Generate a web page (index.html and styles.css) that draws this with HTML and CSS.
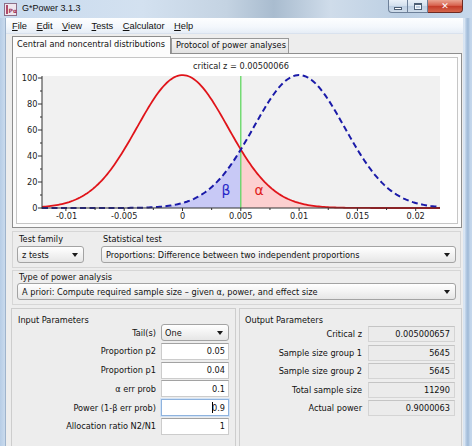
FILE: index.html
```html
<!DOCTYPE html>
<html>
<head>
<meta charset="utf-8">
<title>G*Power 3.1.3</title>
<link rel="stylesheet" href="styles.css">
</head>
<body>
<div class="window">
  <div class="titlebar">
    <svg class="appicon" width="13" height="13" viewBox="0 0 13 13">
      <rect x="0.5" y="0.5" width="12" height="12" fill="#efe6ee" stroke="#8c6f88"/>
      <rect x="2" y="2" width="2" height="9" fill="#b04a6a"/>
      <text x="4.5" y="10" class="icotext">Pα</text>
    </svg>
    <span class="title">G*Power 3.1.3</span>
    <div class="controls">
      <div class="ctl min"><span class="minglyph"></span></div>
      <div class="ctl max"><span class="maxglyph"></span></div>
      <div class="ctl close">✕</div>
    </div>
  </div>
  <div class="client">
    <div class="menubar">
      <span><u>F</u>ile</span>
      <span><u>E</u>dit</span>
      <span><u>V</u>iew</span>
      <span><u>T</u>ests</span>
      <span><u>C</u>alculator</span>
      <span><u>H</u>elp</span>
    </div>
    <div class="tabs">
      <div class="tab active">Central and noncentral distributions</div>
      <div class="tab second">Protocol of power analyses</div>
    </div>
    <div class="tabpanel">
      <div class="chartbox">
        <svg class="chart" width="440" height="165" viewBox="17 58 440 165">
          <rect x="42" y="76" width="398" height="132" fill="#f1f1f1"/>
          <text class="ctitle" x="241" y="69" text-anchor="middle">critical z = 0.00500066</text>
          <path id="betaFill" fill="#c8c9f6" d=""/>
          <path id="alphaFill" fill="#fcd0d0" d=""/>
          <line x1="240.8" y1="76" x2="240.8" y2="208" stroke="#55d655" stroke-width="1.2"/>
          <path id="redCurve" fill="none" stroke="#e0141a" stroke-width="1.8" d=""/>
          <path id="blueCurve" fill="none" stroke="#1a1aa8" stroke-width="2" stroke-dasharray="6 3.5" d=""/>
          <g stroke="#333" stroke-width="1">
            <line x1="42" y1="76" x2="42" y2="208.5"/>
            <line x1="41.5" y1="208" x2="440" y2="208"/>
            <line x1="65.9" y1="208" x2="65.9" y2="211"/>
            <line x1="95.05" y1="208" x2="95.05" y2="210"/>
            <line x1="124.2" y1="208" x2="124.2" y2="211"/>
            <line x1="153.35" y1="208" x2="153.35" y2="210"/>
            <line x1="182.5" y1="208" x2="182.5" y2="211"/>
            <line x1="211.65" y1="208" x2="211.65" y2="210"/>
            <line x1="240.8" y1="208" x2="240.8" y2="211"/>
            <line x1="269.95" y1="208" x2="269.95" y2="210"/>
            <line x1="299.1" y1="208" x2="299.1" y2="211"/>
            <line x1="328.25" y1="208" x2="328.25" y2="210"/>
            <line x1="357.4" y1="208" x2="357.4" y2="211"/>
            <line x1="386.55" y1="208" x2="386.55" y2="210"/>
            <line x1="415.7" y1="208" x2="415.7" y2="211"/>
            <line x1="38" y1="208" x2="42" y2="208"/>
            <line x1="40" y1="195" x2="42" y2="195"/>
            <line x1="38" y1="182" x2="42" y2="182"/>
            <line x1="40" y1="169" x2="42" y2="169"/>
            <line x1="38" y1="156" x2="42" y2="156"/>
            <line x1="40" y1="143" x2="42" y2="143"/>
            <line x1="38" y1="130" x2="42" y2="130"/>
            <line x1="40" y1="117" x2="42" y2="117"/>
            <line x1="38" y1="104" x2="42" y2="104"/>
            <line x1="40" y1="91" x2="42" y2="91"/>
            <line x1="38" y1="78" x2="42" y2="78"/>
          </g>
          <g class="axislbl" text-anchor="middle">
            <text x="66.5" y="219">-0.01</text>
            <text x="124.2" y="219">-0.005</text>
            <text x="182.5" y="219">0</text>
            <text x="240.8" y="219">0.005</text>
            <text x="299.1" y="219">0.01</text>
            <text x="357.4" y="219">0.015</text>
            <text x="415.7" y="219">0.02</text>
          </g>
          <g class="axislbl" text-anchor="end">
            <text x="37.5" y="211">0</text>
            <text x="37.5" y="185">20</text>
            <text x="37.5" y="159">40</text>
            <text x="37.5" y="133">60</text>
            <text x="37.5" y="107">80</text>
            <text x="37.5" y="81">100</text>
          </g>
          <text class="greek beta" x="226" y="195" text-anchor="middle">β</text>
          <text class="greek alpha" x="259" y="195" text-anchor="middle">α</text>
        </svg>
      </div>
    </div>
    <div class="group tests">
      <div class="col family">
        <div class="lbl">Test family</div>
        <div class="select"><span>z tests</span><span class="arrow"></span></div>
      </div>
      <div class="col stat">
        <div class="lbl">Statistical test</div>
        <div class="select"><span>Proportions: Difference between two independent proportions</span><span class="arrow"></span></div>
      </div>
    </div>
    <div class="group analysis">
      <div class="lbl">Type of power analysis</div>
      <div class="select"><span>A priori: Compute required sample size – given α, power, and effect size</span><span class="arrow"></span></div>
    </div>
    <div class="params">
      <div class="pgroup input">
        <div class="ptitle">Input Parameters</div>
        <div class="rows inrows">
          <span class="plabel">Tail(s)</span>
          <div class="select tail"><span>One</span><span class="arrow"></span></div>
          <span class="plabel">Proportion p2</span>
          <div class="field">0.05</div>
          <span class="plabel">Proportion p1</span>
          <div class="field">0.04</div>
          <span class="plabel">α err prob</span>
          <div class="field">0.1</div>
          <span class="plabel">Power (1-β err prob)</span>
          <div class="field focus"><span class="caret"></span>0.9</div>
          <span class="plabel">Allocation ratio N2/N1</span>
          <div class="field">1</div>
        </div>
      </div>
      <div class="pgroup output">
        <div class="ptitle">Output Parameters</div>
        <div class="rows outrows">
          <span class="plabel">Critical z</span>
          <div class="outval">0.005000657</div>
          <span class="plabel">Sample size group 1</span>
          <div class="outval">5645</div>
          <span class="plabel">Sample size group 2</span>
          <div class="outval">5645</div>
          <span class="plabel">Total sample size</span>
          <div class="outval">11290</div>
          <span class="plabel">Actual power</span>
          <div class="outval">0.9000063</div>
        </div>
      </div>
    </div>
  </div>
</div>
<script src="chart.js"></script>
</body>
</html>
```

FILE: styles.css
```css
* { box-sizing: border-box; }
html, body { margin: 0; padding: 0; }
body {
  width: 472px;
  height: 446px;
  overflow: hidden;
  font-family: "DejaVu Sans", sans-serif;
  font-size: 8.2px;
  color: #111;
  background: #c3d6eb;
}
.window {
  width: 472px;
  height: 446px;
  display: flex;
  flex-direction: column;
  background: linear-gradient(90deg, #b7cde6 0, #c9daed 5px, #c9daed 463px, #e4edf7 464px, #b6cce5 466px, #9fb9d6 468px, #c0d4ea 470px, #c6d8ec 472px);
}
.titlebar {
  height: 18px;
  flex: none;
  display: flex;
  align-items: flex-start;
  background: linear-gradient(90deg, #c8daee 0%, #d3e1f0 30%, #c4d3e2 48%, #a9bccf 58%, #cfdcea 70%, #bccfe3 85%, #c6d8ec 100%);
  font-family: "Liberation Sans", Arial, sans-serif;
}
.appicon { margin: 3px 0 0 4px; flex: none; }
.icotext { font-family: "DejaVu Sans", sans-serif; font-size: 6px; font-weight: bold; fill: #a03a5e; }
.title {
  margin-left: 5px;
  font-size: 9px;
  line-height: 17px;
  color: #111;
}
.controls {
  margin-left: auto;
  margin-right: 9px;
  display: flex;
}
.ctl {
  height: 13px;
  border: 1px solid #6d8099;
  border-top: none;
  display: flex;
  align-items: center;
  justify-content: center;
}
.ctl.min {
  width: 20px;
  border-radius: 0 0 0 4px;
  background: linear-gradient(#e9f0f8, #d2dfed 50%, #bccee2 51%, #cfdcea);
}
.ctl.max {
  width: 20px;
  border-left: none;
  background: linear-gradient(#e9f0f8, #d2dfed 50%, #bccee2 51%, #cfdcea);
}
.ctl.close {
  width: 35px;
  border-color: #6e2a22;
  border-left: none;
  border-radius: 0 0 4px 0;
  background: linear-gradient(#eaa592, #d86450 45%, #c43b28 52%, #d5664c);
  color: #fff;
  font-size: 9px;
  font-weight: bold;
  font-family: "DejaVu Sans", sans-serif;
}
.minglyph {
  width: 8px;
  height: 3px;
  margin-top: 4px;
  background: #fff;
  border: 1px solid #4d5f75;
}
.maxglyph {
  width: 8px;
  height: 7px;
  border: 1px solid #4d5f75;
  border-top-width: 2px;
  background: transparent;
  box-shadow: inset 0 0 0 1px #f2f6fb;
}
.client {
  flex: 1;
  margin: 0 9px 0 6px;
  background: #ededed;
  display: flex;
  flex-direction: column;
  box-shadow: -1px 0 0 #9fb4cc;
  overflow: hidden;
}
.menubar {
  height: 16px;
  flex: none;
  display: flex;
  align-items: center;
  gap: 9.5px;
  padding-left: 6px;
  background: linear-gradient(#fdfeff, #f3f7fc 60%, #e6edf6);
  border-bottom: 1px solid #d9e2ee;
  font-family: "Liberation Sans", Arial, sans-serif;
  font-size: 9.3px;
  color: #111;
}
.menubar u { text-decoration-thickness: 1px; text-underline-offset: 1px; }
.tabs {
  height: 17px;
  flex: none;
  margin: 2px 0 0 6px;
  display: flex;
  align-items: flex-end;
}
.tab {
  height: 15px;
  line-height: 13px;
  padding-left: 4px;
  border: 1px solid #999;
  border-bottom: none;
  background: linear-gradient(#f6f6f6, #e2e2e2);
  white-space: nowrap;
}
.tab.active {
  width: 159px;
  height: 18px;
  line-height: 15px;
  margin-bottom: -1px;
  position: relative;
  z-index: 1;
  background: #fcfcfc;
  border-color: #8e8e8e;
}
.tab.second { width: 118px; }
.tabpanel {
  height: 175px;
  width: 450px;
  flex: none;
  margin-left: 6px;
  border: 1px solid #8e8e8e;
  background: #fcfcfc;
  padding: 3px;
}
.chartbox {
  height: 167px;
  border: 1px solid #c6c6c6;
  background: #fff;
}
.chart { display: block; }
.ctitle, .axislbl text {
  font-family: "DejaVu Sans", sans-serif;
  font-size: 8.2px;
  fill: #222;
}
.greek { font-family: "DejaVu Sans", sans-serif; font-size: 14px; }
.beta { fill: #2828c8; }
.alpha { fill: #e01c1c; }
.group {
  flex: none;
  margin-left: 6px;
  width: 449px;
  border: 1px solid #d6d6d6;
}
.group.tests {
  margin-top: 3px;
  height: 37px;
  padding: 1px 4px 4px 4px;
  display: flex;
  gap: 17px;
}
.col { display: flex; flex-direction: column; }
.col.family { width: 67px; flex: none; }
.col.stat { flex: 1; }
.lbl {
  height: 13px;
  line-height: 13px;
  padding-left: 2px;
  color: #111;
}
.group.analysis {
  margin-top: 2px;
  height: 35px;
  padding: 0 4px 4px 4px;
}
.group.analysis .lbl { height: 12px; line-height: 12px; }
.select {
  height: 17px;
  display: flex;
  align-items: center;
  justify-content: space-between;
  padding: 0 5px 0 4px;
  border: 1px solid #a3a3a3;
  border-radius: 3px;
  background: linear-gradient(#ffffff, #f4f4f4 45%, #e6e6e6);
  white-space: nowrap;
  overflow: hidden;
  color: #111;
}
.arrow {
  flex: none;
  width: 0;
  height: 0;
  border-left: 3.5px solid transparent;
  border-right: 3.5px solid transparent;
  border-top: 4px solid #1a1a1a;
}
.params {
  flex: none;
  height: 150px;
  margin: 3px 0 0 5px;
  display: flex;
  gap: 3px;
}
.pgroup {
  border: 1px solid #cdcdcd;
  border-bottom: none;
  padding-top: 6px;
}
.pgroup.input { width: 225px; padding-right: 6px; }
.pgroup.output { width: 223px; padding-right: 6px; }
.ptitle {
  height: 10px;
  line-height: 10px;
  color: #111;
}
.input .ptitle { padding-left: 6px; }
.output .ptitle { padding-left: 5px; }
.rows {
  display: grid;
  align-items: center;
}
.inrows {
  margin-top: -1px;
  grid-template-columns: 1fr 68px;
  grid-auto-rows: 17px;
  column-gap: 5px;
  row-gap: 1.8px;
}
.outrows {
  margin-top: 1px;
  grid-template-columns: 1fr 87px;
  grid-auto-rows: 16px;
  column-gap: 6px;
  row-gap: 2.6px;
}
.plabel {
  text-align: right;
  white-space: nowrap;
  color: #111;
}
.select.tail { height: 17px; padding-left: 3px; }
.field {
  height: 17px;
  display: flex;
  align-items: center;
  justify-content: flex-end;
  padding-right: 3px;
  background: #fff;
  border: 1px solid #cccccc;
  border-top-color: #a2a2a2;
}
.field.focus {
  border-color: #8fb3de;
  box-shadow: 0 0 0 1px #d3e3f5;
}
.caret {
  width: 0;
  height: 11px;
  border-left: 1px solid #000;
  margin-right: -1px;
}
.outval {
  height: 16px;
  line-height: 14px;
  text-align: right;
  padding-right: 4px;
  background: #ebebeb;
  border: 1px solid #d4d4d4;
  border-top-color: #c4c4c4;
}
```

FILE: chart.js
```js
(function () {
  var X0 = 182.5, PX = 11660, Y0 = 208, PY = 1.3;
  var crit = 0.005000657;
  var sigma = crit / 1.2815516;
  var peak = 1 / (sigma * Math.sqrt(2 * Math.PI));
  var xmin = (42 - X0) / PX, xmax = (440 - X0) / PX;
  function pdf(v, mu) { var z = (v - mu) / sigma; return peak * Math.exp(-z * z / 2); }
  function sx(v) { return X0 + v * PX; }
  function sy(d) { return Y0 - d * PY; }
  function pts(mu, a, b) {
    var out = [], n = 220;
    for (var i = 0; i <= n; i++) {
      var v = a + (b - a) * i / n;
      out.push(sx(v).toFixed(2) + ',' + sy(pdf(v, mu)).toFixed(2));
    }
    return out;
  }
  function set(id, d) { var el = document.getElementById(id); if (el) el.setAttribute('d', d); }
  set('redCurve', 'M' + pts(0, xmin, xmax).join(' L'));
  set('blueCurve', 'M' + pts(0.01, xmin, xmax).join(' L'));
  set('betaFill', 'M' + sx(xmin).toFixed(2) + ',' + Y0 + ' L' + pts(0.01, xmin, crit).join(' L') + ' L' + sx(crit).toFixed(2) + ',' + Y0 + ' Z');
  set('alphaFill', 'M' + sx(crit).toFixed(2) + ',' + Y0 + ' L' + pts(0, crit, xmax).join(' L') + ' L' + sx(xmax).toFixed(2) + ',' + Y0 + ' Z');
})();
```
